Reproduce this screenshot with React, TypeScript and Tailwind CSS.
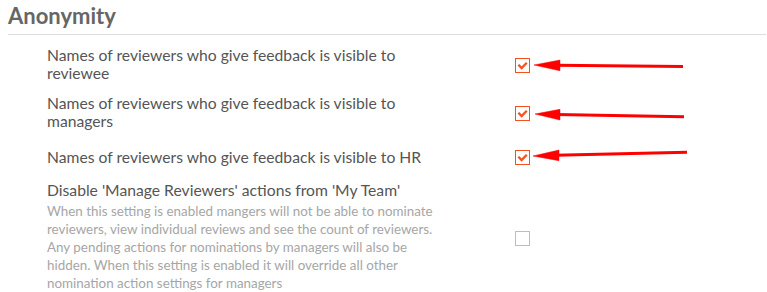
import React from "react";

function Check({ checked }: { checked: boolean }) {
  if (checked) {
    return (
      <div className="w-[15px] h-[15px] border-[1.5px] border-[#f4511e] bg-white flex items-center justify-center shrink-0">
        <svg width="12" height="12" viewBox="0 0 12 12">
          <polyline points="2.2,5.6 4.6,8 9,3.6" fill="none" stroke="#f4511e" strokeWidth="2.3" strokeLinecap="square" />
        </svg>
      </div>
    );
  }
  return <div className="w-[15px] h-[15px] border-[1.5px] border-[#bdbdbd] bg-white shrink-0" />;
}

export default function App() {
  return (
    <div
      className="relative w-[767px] h-[292px] bg-white overflow-hidden"
      style={{ fontFamily: "Lato, 'Open Sans', sans-serif" }}
    >
      <div className="pl-[8px] pt-[4px] pr-[1px]">
        <h2 className="text-[22px] leading-[24px] font-bold text-[#666666] pb-[6px] border-b border-[#dddddd]">
          Anonymity
        </h2>
      </div>
      <div className="pl-[47px] text-[15.7px] leading-[18px] text-[#555555]">
        <div className="flex mt-[11px]">
          <div className="w-[400px]">Names of reviewers who give feedback is visible to reviewee</div>
          <div className="ml-[68px] mt-[12px]">
            <Check checked />
          </div>
        </div>
        <div className="flex mt-[12px]">
          <div className="w-[400px]">Names of reviewers who give feedback is visible to managers</div>
          <div className="ml-[68px] mt-[12px]">
            <Check checked />
          </div>
        </div>
        <div className="flex mt-[18px]">
          <div className="w-[400px]">Names of reviewers who give feedback is visible to HR</div>
          <div className="ml-[68px] mt-[2px]">
            <Check checked />
          </div>
        </div>
        <div className="flex mt-[15px]">
          <div className="w-[400px]">
            <div>Disable 'Manage Reviewers' actions from 'My Team'</div>
            <div className="mt-[3px] w-[388px] text-[13.4px] leading-[18px] text-[#a6a6a6]">
              When this setting is enabled mangers will not be able to nominate reviewers, view individual reviews
              and see the count of reviewers. Any pending actions for nominations by managers will also be hidden.
              When this setting is enabled it will override all other nomination action settings for managers
            </div>
          </div>
          <div className="ml-[68px] mt-[50px]">
            <Check checked={false} />
          </div>
        </div>
      </div>
      <svg className="absolute left-0 top-0 pointer-events-none" width="767" height="292" viewBox="0 0 767 292">
        <g fill="#ff0000" stroke="#ff0000">
          <line x1="683" y1="66.5" x2="556" y2="65.2" strokeWidth="3" />
          <polygon points="534,65 560,60 560,70.8" strokeWidth="0.5" />
          <line x1="684" y1="116.7" x2="556" y2="114.6" strokeWidth="3" />
          <polygon points="535,114 560,109.3 560,120" strokeWidth="0.5" />
          <line x1="687" y1="152.3" x2="555" y2="155.2" strokeWidth="3" />
          <polygon points="533,156 559,150 559,160.7" strokeWidth="0.5" />
        </g>
      </svg>
    </div>
  );
}
